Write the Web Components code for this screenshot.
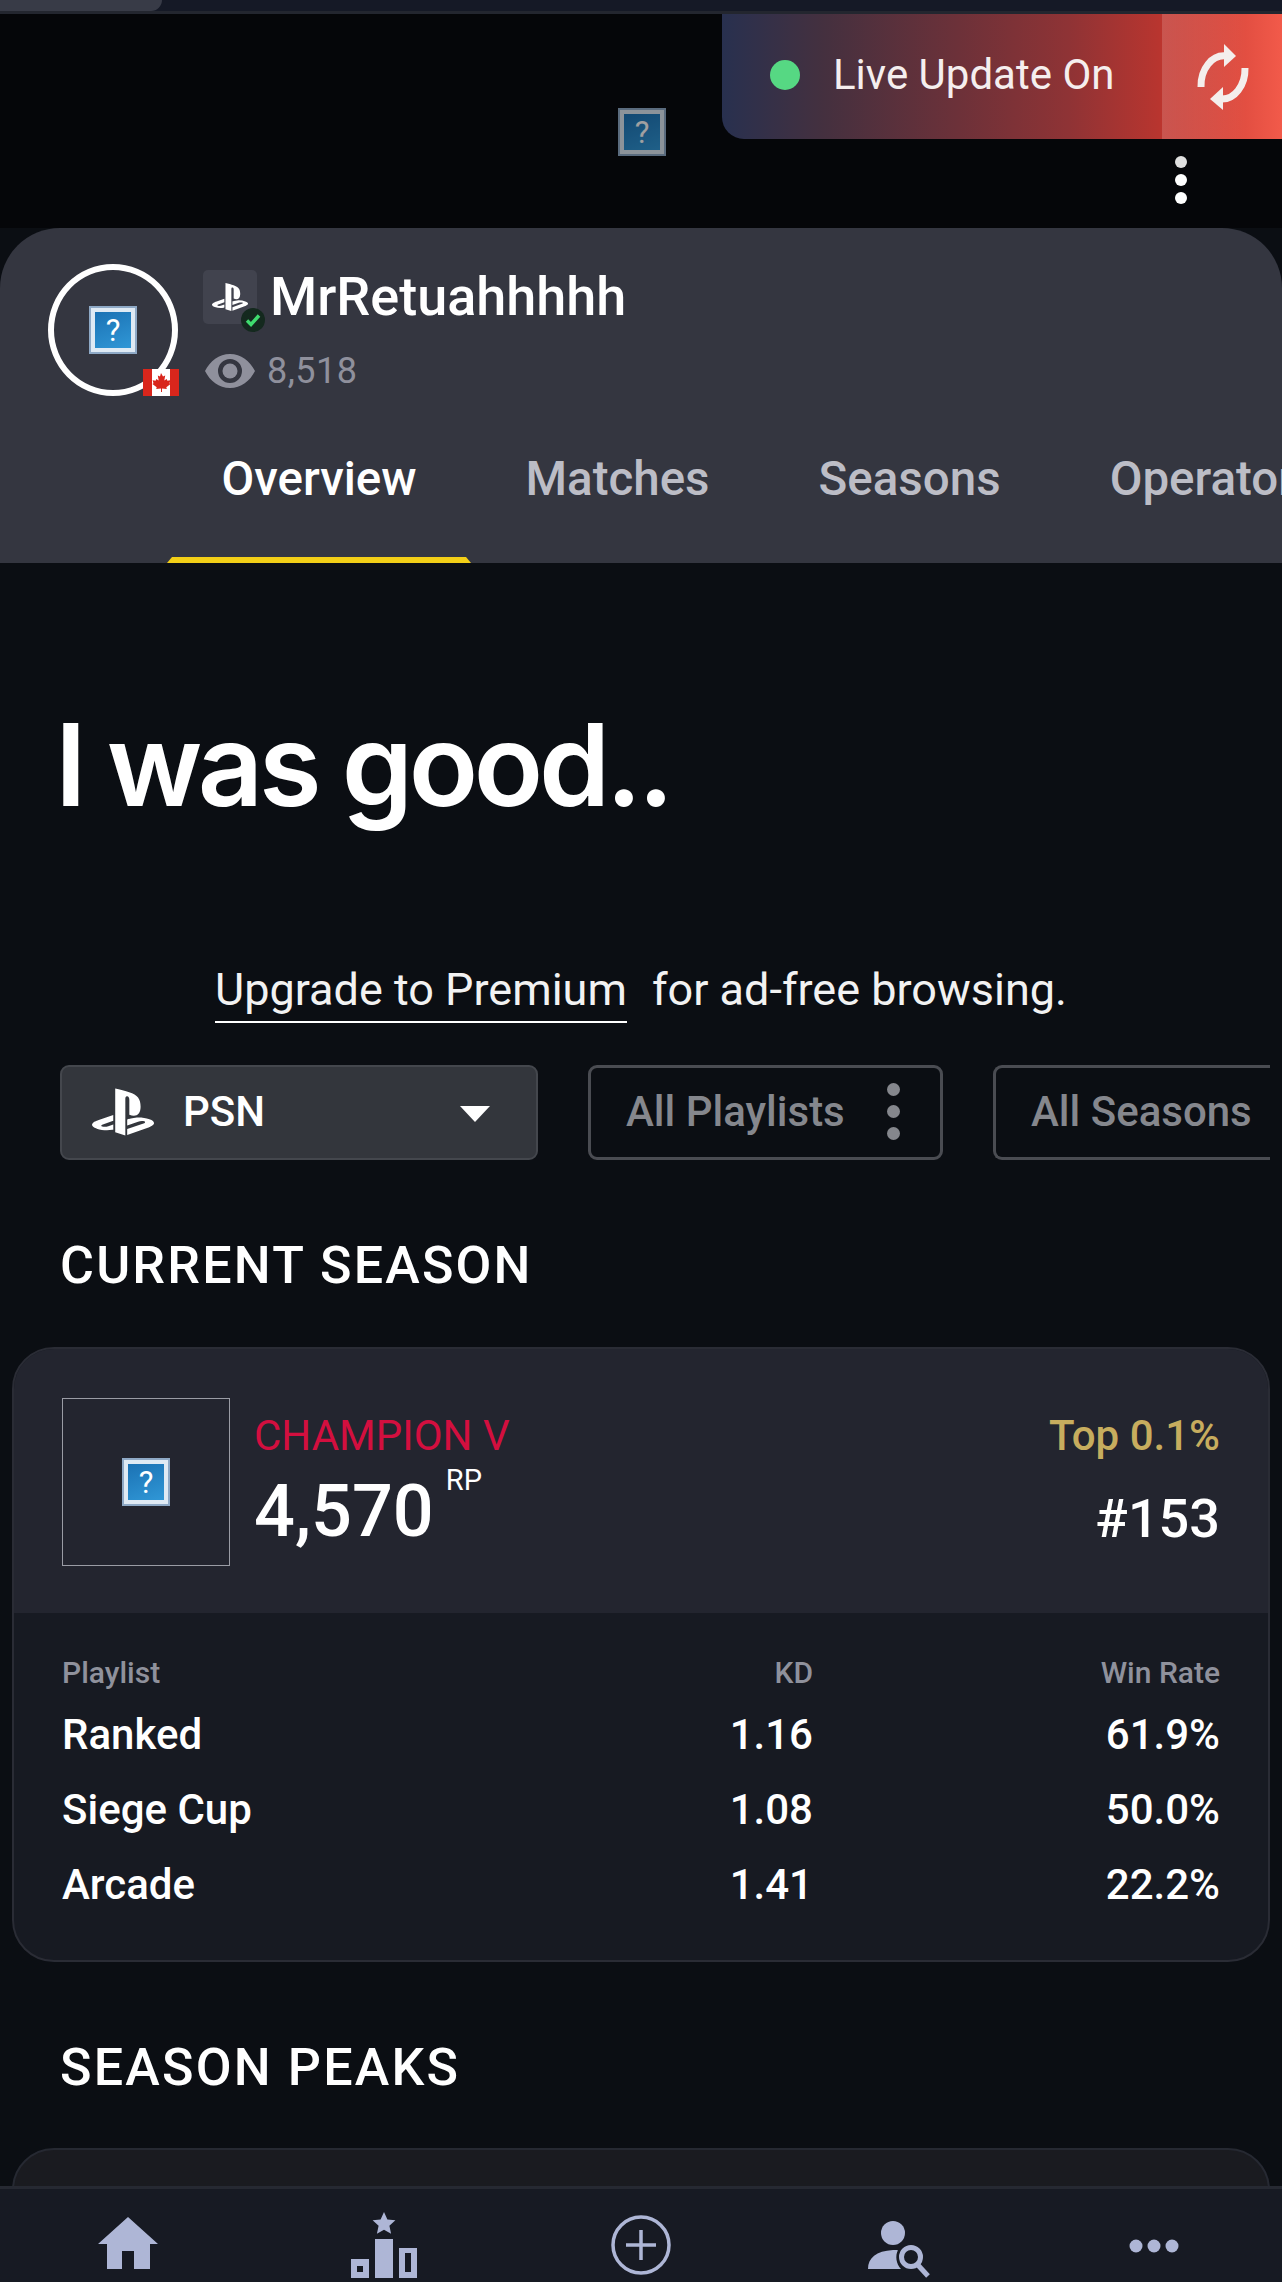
<!DOCTYPE html>
<html>
<head>
<meta charset="utf-8">
<title>MrRetuahhhhh</title>
<style>
  html, body { margin: 0; padding: 0; background: #0b0e13; }
  body { width: 1282px; height: 2282px; overflow: hidden; color: #fff; font-family: Roboto, "Liberation Sans", sans-serif; }
</style>
</head>
<body>
<app-shell>
  <top-strip></top-strip>
  <hero-zone></hero-zone>
  <profile-card name="MrRetuahhhhh" views="8,518"></profile-card>
  <page-title>I was good..</page-title>
  <promo-line></promo-line>
  <filter-row></filter-row>
  <section-title>CURRENT SEASON</section-title>
  <rank-card>
    <stat-row head a="Playlist" b="KD" c="Win Rate"></stat-row>
    <stat-row a="Ranked" b="1.16" c="61.9%"></stat-row>
    <stat-row a="Siege Cup" b="1.08" c="50.0%"></stat-row>
    <stat-row a="Arcade" b="1.41" c="22.2%"></stat-row>
  </rank-card>
  <section-title>SEASON PEAKS</section-title>
  <peaks-card></peaks-card>
  <bottom-nav slot="nav"></bottom-nav>
</app-shell>

<script>
const PS_PATH = 'M8.985 2.596v17.548l3.915 1.261V6.688c0-.69.304-1.151.794-.991.636.181.76.814.76 1.505v5.876c2.441 1.193 4.362-.002 4.362-3.153 0-3.237-1.126-4.675-4.438-5.827-1.307-.448-3.728-1.186-5.391-1.502h-.002zm4.656 16.242l6.296-2.275c.715-.258.826-.625.246-.818-.586-.192-1.637-.139-2.357.123l-4.205 1.499v-2.385l.24-.085s1.201-.42 2.913-.615c1.696-.18 3.785.03 5.437.661 1.848.601 2.04 1.472 1.576 2.072-.465.6-1.622 1.036-1.622 1.036l-8.544 3.107v-2.297l.02-.023zM1.807 18.6c-1.9-.545-2.214-1.668-1.352-2.32.801-.586 2.16-1.052 2.16-1.052l5.615-2.013v2.313L4.205 17c-.705.271-.825.632-.239.826.586.195 1.637.15 2.343-.12L8.247 17v2.074c-.121.029-.256.044-.391.073-1.939.331-3.996.196-6.038-.479l-.011-.068z';

// small helper, every element is just a style block + markup in an open shadow root
function makeEl(name, css, html) {
  customElements.define(name, class extends HTMLElement {
    constructor() {
      super();
      const root = this.attachShadow({ mode: 'open' });
      const body = typeof html === 'function' ? html(this) : html;
      root.innerHTML = `<style>${css}</style>${body}`;
    }
  });
}

makeEl('app-shell', `
  :host { display: flex; flex-direction: column; height: 2282px; }
  .scroll { flex: 1; min-height: 0; overflow: hidden; }
`, `<div class="scroll"><slot></slot></div><slot name="nav"></slot>`);

makeEl('top-strip', `
  :host { display: block; height: 14px; box-sizing: border-box; background: #151926; border-bottom: 3px solid #23262f; }
  div { width: 162px; height: 11px; background: #383b47; border-bottom-right-radius: 14px; }
`, `<div></div>`);

makeEl('broken-img', `
  :host { display: block; width: 48px; height: 48px; }
  .frame { box-sizing: border-box; width: 48px; height: 48px; padding: 2px; background: #8ea9c6; }
  .inner { box-sizing: border-box; height: 100%; border: 4px solid #dfeaf4; background: linear-gradient(160deg, #1b72b4, #3097d6);
    display: flex; align-items: center; justify-content: center;
    font: 400 31px/1 Roboto, sans-serif; color: #fff; }
`, `<div class="frame"><div class="inner">?</div></div>`);

makeEl('live-banner', `
  :host { display: flex; height: 125px; border-bottom-left-radius: 22px; overflow: hidden;
    background: linear-gradient(90deg, #28304f 0%, #44303f 18%, #6c3139 42%, #8f3335 62%, #b8352f 78%, #c0352e 79%, #f25a4a 100%); }
  .label { flex: 1; display: flex; align-items: center; padding: 0 0 3px 48px; gap: 33px; font: 400 42px/1 Roboto, sans-serif; color: #f5eeee; }
  .dot { width: 30px; height: 30px; border-radius: 50%; background: #56d883; }
  .sync { width: 120px; display: flex; align-items: center; padding-left: 35px; box-sizing: border-box;
    background: linear-gradient(90deg, rgba(255,255,255,.16), rgba(255,255,255,0) 70%); }
`, `<div class="label"><span class="dot"></span><span>Live Update On</span></div>
  <div class="sync">
    <svg width="52" height="66" viewBox="0 0 52 66" fill="none">
      <path d="M4 43 A23 30 0 0 1 29 12" stroke="#f4eeec" stroke-width="7"/>
      <path d="M48 24 A23 30 0 0 1 24 55" stroke="#f4eeec" stroke-width="7"/>
      <polygon points="27,0 39,12 27,23" fill="#f4eeec"/>
      <polygon points="13,55 26,43 26,66" fill="#f4eeec"/>
    </svg>
  </div>`);

makeEl('hero-zone', `
  :host { display: grid; grid-template-columns: 722px 560px; height: 214px; background: #050609; }
  .pic { padding: 94px 0 0 618px; opacity: .62; }
  .dots { display: flex; flex-direction: column; gap: 6px; padding: 17px 0 0 453px; }
  .dots i { display: block; width: 12px; height: 12px; border-radius: 50%; background: #fff; }
  .dots i:first-child { background: #e0e0e0; }
`, `<div class="pic"><broken-img></broken-img></div>
  <div><live-banner></live-banner><div class="dots"><i></i><i></i><i></i></div></div>`);

makeEl('tab-bar', `
  :host { display: flex; height: 132px; overflow: hidden; white-space: nowrap; padding-left: 167px; }
  a { position: relative; box-sizing: border-box; height: 132px; padding: 18px 54.500px 0; font: 500 47.500px/60px Roboto, sans-serif; color: #bcbdc6; flex: none; }
  a.on { color: #fff; }
  a.on::after { content: ""; position: absolute; left: 0; right: 0; bottom: 0; height: 6px; background: #f3cf17;
    clip-path: polygon(5px 0, calc(100% - 5px) 0, 100% 100%, 0 100%); }
`, `<a class="on">Overview</a><a>Matches</a><a>Seasons</a><a>Operators</a>`);

makeEl('profile-card', `
  :host { display: block; height: 335px; box-sizing: border-box; background: #343640; border-radius: 60px 60px 0 0; position: relative; }
  .top { display: flex; height: 203px; box-sizing: border-box; padding: 36px 0 0 48px; }
  .avatar { position: relative; width: 130px; height: 132px; box-sizing: border-box; border: 6px solid #fff; border-radius: 50%;
    display: flex; align-items: center; justify-content: center; }
  .flag { position: absolute; left: 89px; top: 99px; }
  .who { margin-left: 25px; padding-top: 6px; }
  .line { display: flex; align-items: center; height: 54px; }
  .ps { position: relative; width: 54px; height: 54px; background: #41434e; border-radius: 5px; display: flex; align-items: center; justify-content: center; }
  .check { position: absolute; left: 38px; top: 38px; width: 24px; height: 24px; border-radius: 50%; background: #14291e; display: flex; align-items: center; justify-content: center; }
  .name { margin-left: 13px; font: 500 54px/54px Roboto, sans-serif; color: #fff; }
  .views { display: flex; align-items: center; margin-top: 29px; height: 36px; color: #8f909c; font: 400 36px/36px Roboto, sans-serif; letter-spacing: .5px; }
  .views svg { margin: 0 12px 0 2px; }
`, el => `<div class="top">
    <div class="avatar"><broken-img></broken-img>
      <svg class="flag" width="36" height="27" viewBox="0 0 36 27">
        <rect width="36" height="27" fill="#fff"/>
        <rect width="9" height="27" fill="#d9261c"/><rect x="27" width="9" height="27" fill="#d9261c"/>
        <path d="M18 5l2 3.6 2.2-1-.9 5 2.4-1.6.7 1.7 3-.4-.9 3 1.1.7-4.3 3.3.5 1.7-4.8-.6V24h-1v-3.6l-4.8.6.5-1.7L9.400 16l1.100-.7-.9-3 3 .4.7-1.700 2.400 1.600-.9-5 2.200 1z" fill="#d9261c" transform="translate(0 -1)"/>
      </svg>
    </div>
    <div class="who">
      <div class="line">
        <div class="ps">
          <svg width="36" height="36" viewBox="0 0 24 24" fill="#fff"><path d="${PS_PATH}"/></svg>
          <div class="check"><svg width="18" height="18" viewBox="0 0 18 18" fill="none"><path d="M3 9.500l4 4 8-9" stroke="#3fdc6e" stroke-width="3.400"/></svg></div>
        </div>
        <span class="name">${el.getAttribute('name')}</span>
      </div>
      <div class="views">
        <svg width="50" height="34" viewBox="0 0 50 34"><path fill-rule="evenodd" fill="#8f909c" d="M25 0C14 0 5 7 0 17c5 10 14 17 25 17s20-7 25-17C45 7 36 0 25 0zm0 5a12 12 0 1 1 0 24 12 12 0 0 1 0-24z"/><circle cx="25" cy="17" r="7.500" fill="#8f909c"/></svg>
        <span>${el.getAttribute('views')}</span>
      </div>
    </div>
  </div><tab-bar></tab-bar>`);

makeEl('page-title', `
  :host { display: block; margin: 142px 0 0 55px; font: 600 114px/120px Inter, sans-serif; color: #fff; letter-spacing: -4.300px; white-space: nowrap; }
`, `<slot></slot>`);

makeEl('promo-line', `
  :host { display: flex; justify-content: center; gap: 25px; margin-top: 134px; height: 64px; font: 400 45px/62px Roboto, sans-serif; color: #f2f2f2; white-space: nowrap; }
  a { display: block; height: 62px; border-bottom: 2px solid #fff; }
`, `<a>Upgrade to Premium</a><span>for ad-free browsing.</span>`);

makeEl('filter-row', `
  :host { display: flex; gap: 50px; height: 95px; margin: 42px 12px 0 60px; overflow: hidden; font: 500 42px/1 Roboto, sans-serif; white-space: nowrap; }
  .btn { box-sizing: border-box; height: 95px; padding-bottom: 2px; flex: none; display: flex; align-items: center; border-radius: 9px; }
  .psn { width: 478px; background: #33363c; border: 2px solid #44474d; color: #fff; padding-left: 30px; padding-right: 46px; }
  .psn svg { margin: 1px 29px 0 0; }
  .psn b { flex: 1; font-weight: 500; }
  .tri { width: 0; height: 0; margin-top: 4px; border-left: 15px solid transparent; border-right: 15px solid transparent; border-top: 16px solid #fff; }
  .out { border: 3px solid #4a4c52; color: #85878d; padding-left: 35px; }
  .pl { width: 355px; }
  .sn { width: 300px; border-right: 0; }
  .dots { display: flex; flex-direction: column; gap: 9px; margin-left: 42px; }
  .dots i { display: block; width: 13px; height: 13px; border-radius: 50%; background: #85878d; }
`, `<div class="btn psn"><svg width="62" height="50" viewBox="0 2 24 20" fill="#fff" preserveAspectRatio="none"><path d="${PS_PATH}"/></svg><b>PSN</b><span class="tri"></span></div>
  <div class="btn out pl"><span>All Playlists</span><span class="dots"><i></i><i></i><i></i></span></div>
  <div class="btn out sn"><span>All Seasons</span></div>`);

makeEl('section-title', `
  :host { display: block; margin: 76px 0 0 60px; font: 500 52px/60px Roboto, sans-serif; letter-spacing: 2.200px; color: #fff; white-space: nowrap; }
`, `<slot></slot>`);

makeEl('stat-row', `
  :host { display: grid; grid-template-columns: 1fr 200px 407px; height: 75px; font: 500 42px/75px Roboto, sans-serif; color: #fff; }
  :host([head]) { height: 44px; font-size: 30px; line-height: 44px; color: #8f919c; }
  .num { text-align: right; }
`, el => `<span>${el.getAttribute('a')}</span><span class="num">${el.getAttribute('b')}</span><span class="num">${el.getAttribute('c')}</span>`);

makeEl('rank-card', `
  :host { display: block; margin: 51px 12px 0 12px; height: 615px; box-sizing: border-box; border: 2px solid #2a2c35; border-radius: 42px; overflow: hidden; background: #171a22; }
  .top { display: flex; height: 264px; box-sizing: border-box; background: #23252f; padding: 49px 48px 0 48px; }
  .sq { box-sizing: border-box; width: 168px; height: 168px; border: 1.5px solid #9a9ca5; display: flex; align-items: center; justify-content: center; }
  .rank { margin-left: 24px; padding-top: 16px; flex: 1; }
  .tier { font: 400 42px/44px Roboto, sans-serif; color: #d30f3f; }
  .score { display: flex; margin-top: 14px; }
  .score b { font: 500 72px/80px Roboto, sans-serif; }
  .score sup { font: 400 29px/30px Roboto, sans-serif; margin: -7px 0 0 12px; }
  .pos { padding-top: 16px; text-align: right; }
  .pct { font: 500 42px/44px Roboto, sans-serif; color: #c7ad5e; }
  .num { font: 500 54px/60px Roboto, sans-serif; margin-top: 31px; }
  .rows { padding: 38px 48px 0 48px; }
  ::slotted(stat-row:nth-of-type(2)) { margin-top: 2px; }
`, `<div class="top">
    <div class="sq"><broken-img></broken-img></div>
    <div class="rank"><div class="tier">CHAMPION V</div><div class="score"><b>4,570</b><sup>RP</sup></div></div>
    <div class="pos"><div class="pct">Top 0.1%</div><div class="num">#153</div></div>
  </div>
  <div class="rows"><slot></slot></div>`);

makeEl('peaks-card', `
  :host { display: block; margin: 50px 12px 0 12px; height: 200px; box-sizing: border-box; background: #1a1b20; border: 2px solid #262932; border-radius: 42px 42px 0 0; }
`, ``);

makeEl('bottom-nav', `
  :host { display: grid; grid-template-columns: repeat(5, 1fr); height: 96px; box-sizing: border-box; background: #171a23; border-top: 3px solid #262932; }
  div { display: flex; justify-content: center; padding-top: var(--t); margin-left: var(--l, 0); }
`, `<div style="--t:28px"><svg width="60" height="52" viewBox="0 0 60 52" fill="#aeb6d6"><path d="M30 0L60 27H52V52H36V34H24V52H9V27H0z"/></svg></div>
  <div style="--t:23px;--l:-4px"><svg width="68" height="66" viewBox="0 0 68 66" fill="#aeb6d6">
      <path d="M35 0l3.400 7.400 8 .9-6 5.400 1.700 8-7.100-4-7.100 4 1.700-8-6-5.400 8-.9z"/>
      <path fill-rule="evenodd" d="M2 47h18v19H2zM8 54v6h6v-6z"/><path d="M26 27h18v39H26z"/>
      <path fill-rule="evenodd" d="M50 36h18v30H50zM56 41v19h6V41z"/></svg></div>
  <div style="--t:26px"><svg width="60" height="60" viewBox="0 0 60 60" fill="none" stroke="#aeb6d6"><circle cx="30" cy="30" r="28" stroke-width="3.500"/><path d="M15 30H45M30 15V45" stroke-width="3.500"/></svg></div>
  <div style="--t:31px;--l:4px"><svg width="62" height="58" viewBox="0 0 62 58" fill="#aeb6d6">
      <circle cx="25" cy="13" r="12"/><path d="M0 49c0-11 8-18 25-19 3 0 5 .2 5 .2-3 5-2 14 3 18.800z"/>
      <circle cx="43" cy="37" r="9.500" fill="none" stroke="#aeb6d6" stroke-width="5"/><path d="M49 44l11 12" stroke="#aeb6d6" stroke-width="5" fill="none"/></svg></div>
  <div style="--t:50px"><svg width="50" height="14" viewBox="0 0 50 14" fill="#aeb6d6"><circle cx="7" cy="7" r="6.500"/><circle cx="25" cy="7" r="6.500"/><circle cx="43" cy="7" r="6.500"/></svg></div>`);
</script>
</body>
</html>
